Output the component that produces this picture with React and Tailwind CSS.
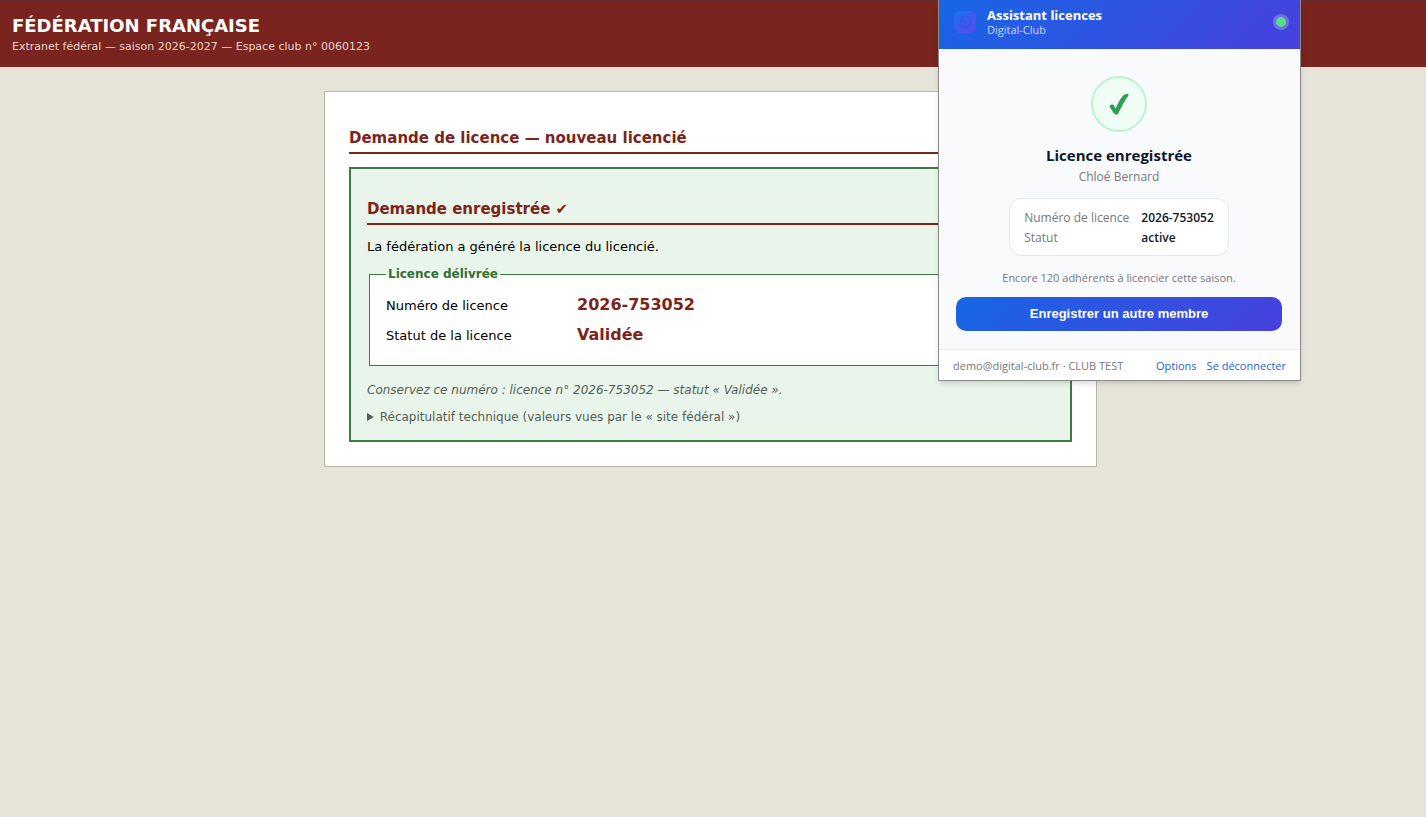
const licence = {
  numero: "2026-753052",
  membre: "Chloé Bernard",
};

function SectionTitle({ children }) {
  return (
    <h2 className="mt-3 mb-[13px] border-b-2 border-[#7b241c] pb-1 text-[15px] leading-5 font-bold text-[#7b241c]">
      {children}
    </h2>
  );
}

function Logo() {
  return (
    <svg width="22" height="22" viewBox="0 0 22 22" aria-hidden="true">
      <defs>
        <linearGradient id="logo" x1="0" y1="0" x2="1" y2="1">
          <stop offset="0" stopColor="#1c70f0" />
          <stop offset="1" stopColor="#5a4aee" />
        </linearGradient>
      </defs>
      <rect width="22" height="22" rx="5" fill="url(#logo)" />
      <path
        d="M6 7.500 9 6h5l2.500 2.500v5L14 16H9L6 13.500V10.500L9 9l2.500 2.500V14"
        fill="none"
        stroke="#2f55e0"
        strokeWidth="2"
        opacity="0.5"
      />
    </svg>
  );
}

function Assistant() {
  return (
    <aside className="absolute top-0 right-[125px] w-[363px] border border-t-0 border-[#8a8a86] bg-[#f9fafc] font-['Open_Sans','Noto_Sans',sans-serif] shadow-md">
      {/* Header */}
      <div className="flex h-[49px] items-center gap-[11px] bg-linear-[135deg] from-[#1766e6] to-[#4840dc] pr-[11px] pb-[6px] pl-[15px] text-white">
        <Logo />
        <div className="flex-1">
          <p className="text-[13px] leading-4 font-bold">Assistant licences</p>
          <p className="text-[11px] leading-[14px] text-[#c9d8fb]">Digital-Club</p>
        </div>
        <span className="size-4 rounded-full border-[3px] border-[#6a72e6] bg-[#5bdb85]"></span>
      </div>

      {/* Result */}
      <div className="flex flex-col items-center pt-[27px] pr-[18px] pb-[18px] pl-[17px]">
        <div className="flex size-14 items-center justify-center rounded-full border-2 border-[#bbf3cf] bg-[#f0fdf5]">
          <svg width="20" height="22" viewBox="0 0 20 22" aria-hidden="true">
            <path
              d="M0.700 14C0 12.200 2.200 11.300 3.800 11.600C5 12 5.600 13.800 6.500 15.800C8.500 11 11 6 14 2.700C15.300 1.300 17.500 0.900 19.300 1.200C19.900 1.400 19.600 2.200 19.200 2.700C15.500 8 12.500 13.500 10 19C9.200 21.400 7.800 22 6.400 21.500C4.500 20.500 2.500 16.500 0.700 14Z"
              fill="#2f9e55"
            />
          </svg>
        </div>
        <h2 className="mt-[11px] text-[15px] leading-6 font-bold text-[#0f172a]">
          Licence enregistrée
        </h2>
        <p className="mt-0.5 text-[12px] leading-4 text-[#75787d]">{licence.membre}</p>

        <dl className="mt-[13px] grid grid-cols-[auto_auto] gap-x-3 rounded-xl border border-[#e4e7eb] bg-white px-[14px] pt-[9px] pb-[7px] text-[12px] leading-5">
          <dt className="text-[#75787d]">Numéro de licence</dt>
          <dd className="font-semibold text-[#0f172a]">{licence.numero}</dd>
          <dt className="text-[#75787d]">Statut</dt>
          <dd className="font-semibold text-[#0f172a]">active</dd>
        </dl>

        <p className="mt-[14px] text-[11px] leading-4 text-[#75787d]">
          Encore 120 adhérents à licencier cette saison.
        </p>
        <button
          type="button"
          className="mt-[11px] h-[34px] w-full rounded-[10px] bg-linear-[135deg] from-[#1766e6] to-[#4840dc] font-['Liberation_Sans',sans-serif] text-[13px] font-bold text-white"
        >
          Enregistrer un autre membre
        </button>
      </div>

      {/* Footer */}
      <div className="flex h-[31px] items-center gap-[10px] border-t border-[#e8eaee] bg-white px-[14px] pt-0.5 text-[11px] text-[#75787d]">
        <span className="flex-1">demo@digital-club.fr · CLUB TEST</span>
        <a href="#options" className="text-[#2563d8]">
          Options
        </a>
        <a href="#deconnexion" className="text-[#2563d8]">
          Se déconnecter
        </a>
      </div>
    </aside>
  );
}

function App() {
  return (
    <div className="relative min-h-screen bg-[#e6e4d9] font-['DejaVu_Sans',sans-serif] text-[13px] text-black">
      <header className="border-t border-[#63302f] bg-[#79241f] px-3 py-3 text-white">
        <h1 className="text-[18px] leading-[26px] font-bold">FÉDÉRATION FRANÇAISE</h1>
        <p className="text-[11px] leading-4 text-[#e8d3d0]">
          Extranet fédéral — saison 2026-2027 — Espace club n° 0060123
        </p>
      </header>

      <main className="pt-6 pr-[5px]">
        <div className="mx-auto max-w-[773px] border border-[#b9b6a3] bg-white p-6">
          <SectionTitle>Demande de licence — nouveau licencié</SectionTitle>

          <section className="border-2 border-[#3a7d3e] bg-[#e9f4ea] px-4 pt-[18px] pb-[14px]">
            <SectionTitle>Demande enregistrée ✔</SectionTitle>
            <p className="leading-[18px]">La fédération a généré la licence du licencié.</p>

            <fieldset className="mx-0.5 mt-[10px] border border-[#3a7d3e] bg-white px-4 pt-2 pb-[15px]">
              <legend className="px-0.5 text-[12px] leading-4 font-bold text-[#2e7031]">
                Licence délivrée
              </legend>
              <dl className="grid grid-cols-[191px_1fr] items-baseline leading-[29px]">
                <dt>Numéro de licence</dt>
                <dd className="text-[16px] font-bold text-[#7b241c]">{licence.numero}</dd>
                <dt>Statut de la licence</dt>
                <dd className="text-[16px] font-bold text-[#7b241c]">Validée</dd>
              </dl>
            </fieldset>

            <p className="mt-[14px] text-[12px] leading-5 text-[#555f56] italic">
              Conservez ce numéro : licence n° {licence.numero} — statut « Validée ».
            </p>
            <details className="mt-2 text-[12px] leading-[18px] text-[#555f56]">
              <summary>Récapitulatif technique (valeurs vues par le « site fédéral »)</summary>
            </details>
          </section>
        </div>
      </main>

      <Assistant />
    </div>
  );
}

export default App;
